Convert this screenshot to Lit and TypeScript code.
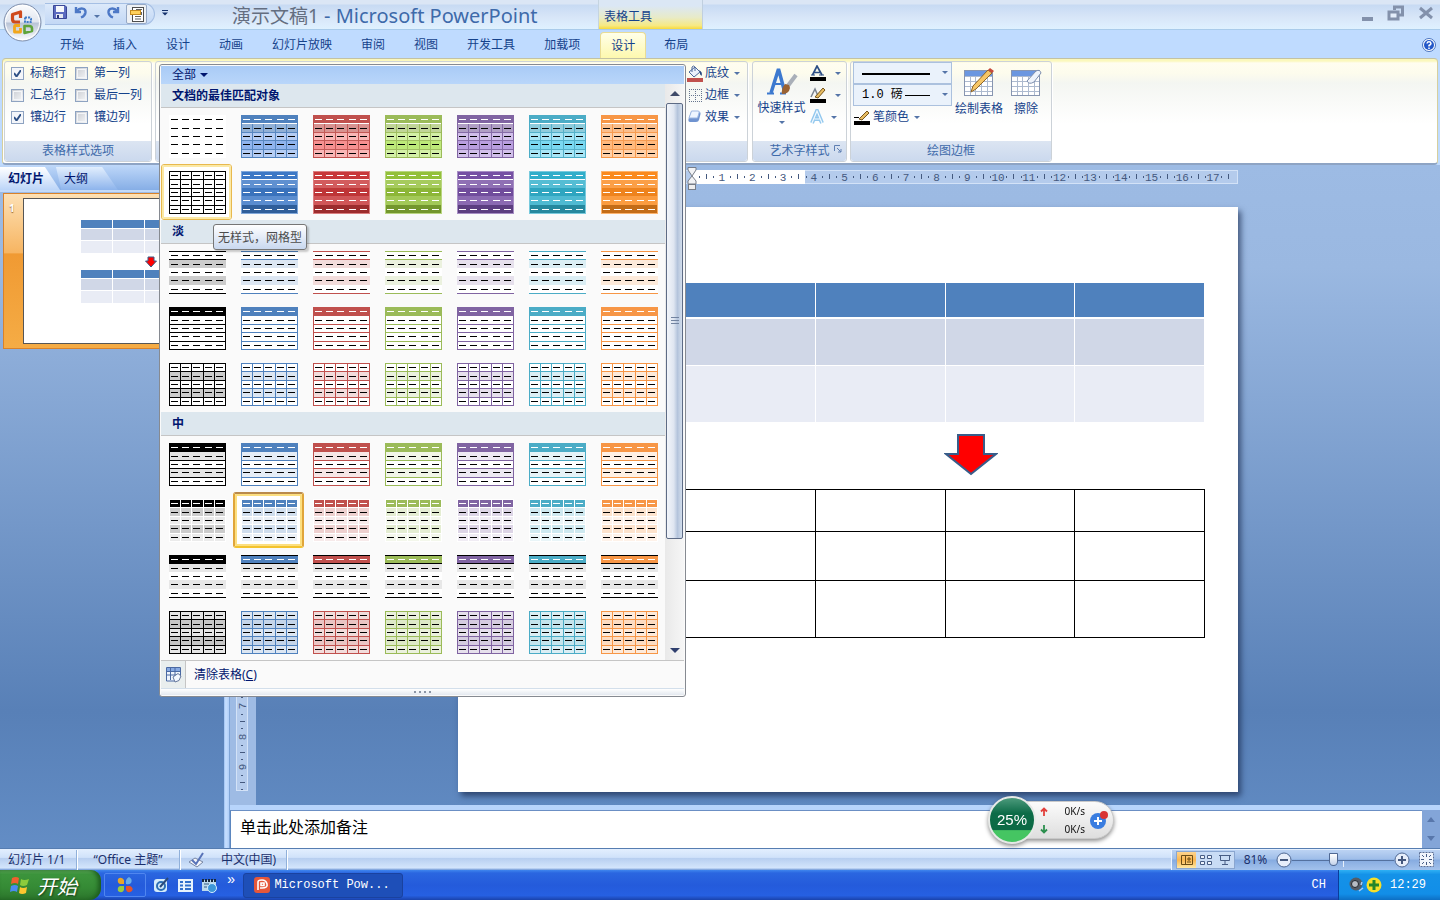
import { LitElement, html, svg, css, nothing } from "lit";
import { customElement, property } from "lit/decorators.js";
import { classMap } from "lit/directives/class-map.js";

const PALETTE = ["#000000", "#4f81bd", "#c0504d", "#9bbb59", "#8064a2", "#4bacc6", "#f79646"];
const VIVID = ["#000000", "#3c78c6", "#c8383a", "#93c03a", "#7650a4", "#30aeca", "#fa8a1e"];
const BRIGHT = ["#000000", "#5a90e6", "#f25c5c", "#9ede3a", "#9870d0", "#3cc6ea", "#ff9840"];
const PALETTE_NAMES = ["黑色", "蓝色", "红色", "绿色", "紫色", "水绿色", "橙色"];
const COLS = [0, 11, 22, 34, 45, 56];
const ROWS = [0, 8, 17, 25, 34, 42];
const DASH_X = [2, 13, 24, 36, 47];
const DASH_Y = [4, 13, 21, 29, 38];

/** Blend a hex colour with a target; amount 1 keeps the colour, 0 gives the target. */
function mix(hex: string, amount: number, target = 255): string {
  const v = [1, 3, 5].map((i) => parseInt(hex.slice(i, i + 2), 16));
  return `rgb(${v.map((c) => Math.round(c * amount + target * (1 - amount))).join(",")})`;
}

interface Look {
  fills: (string | null)[];
  lines?: string;
  linesAt?: number[];
  vlines?: string;
  vFrom?: number;
  outline?: string;
  headDash?: string;
  dash?: string;
  under?: boolean;
}

function look(kind: string, c: string): Look {
  const black = c === PALETTE[0];
  const vivid = VIVID[PALETTE.indexOf(c)];
  const bright = BRIGHT[PALETTE.indexOf(c)];
  const t = (a: number, b: number) => (black ? mix(c, b) : mix(c, a));
  switch (kind) {
    case "themed":
      if (black) return { fills: [] };
      return { fills: [c, mix(c, 0.62), mix(bright, 0.45), mix(bright, 0.68), mix(bright, 0.45)], lines: mix(c, 0.95), linesAt: [2, 3, 4, 5], vlines: mix(c, 0.95), vFrom: 9, outline: c, headDash: "#fff", under: true };
    case "solid":
      if (black) return { fills: [], lines: c, linesAt: [0, 1, 2, 3, 4, 5], vlines: c, outline: c };
      return { fills: [vivid, mix(vivid, 0.82), mix(vivid, 0.95, 0), mix(vivid, 0.85), mix(vivid, 0.78, 0)], headDash: "#fff", dash: "#fff", under: true, outline: mix(vivid, 0.65) };
    case "light1":
      return { fills: [null, t(0.2, 0.2), null, t(0.2, 0.2)], lines: c, linesAt: [0, 1, 5] };
    case "light2":
      return { fills: [c], lines: c, linesAt: [0, 1, 2, 3, 4, 5], outline: c, headDash: "#fff" };
    case "light3":
      return { fills: [null, t(0.2, 0.2), null, t(0.2, 0.2)], lines: c, linesAt: [0, 1, 2, 3, 4, 5], vlines: c, outline: c };
    case "medium1":
      return { fills: [c, t(0.14, 0.1), null, t(0.14, 0.1)], lines: c, linesAt: [0, 1, 2, 3, 4, 5], outline: c, headDash: "#fff" };
    case "medium2":
      return { fills: [c, t(0.27, 0.2), t(0.12, 0.08), t(0.27, 0.2), t(0.12, 0.08)], lines: "#fff", linesAt: [0, 1, 2, 3, 4, 5], vlines: "#fff", outline: "#fff", headDash: "#fff" };
    case "medium3":
      return { fills: [c, "#e7e7e7", null, "#e7e7e7"], lines: "#000", linesAt: [0, 1, 5], headDash: "#fff" };
    default:
      return { fills: [t(0.2, 0.1), t(0.33, 0.22), t(0.2, 0.1), t(0.33, 0.22), t(0.2, 0.1)], lines: c, linesAt: [0, 1, 2, 3, 4, 5], vlines: c, outline: c };
  }
}

@customElement("style-thumb")
class StyleThumb extends LitElement {
  @property() kind = "";
  @property() color = "#000000";

  static styles = css`
    :host { display: block; width: 57px; height: 43px; }
    svg { display: block; background: #fff; }
  `;

  render() {
    const k = look(this.kind, this.color);
    const vFrom = k.vFrom ?? 0;
    return html`<svg width="57" height="43" shape-rendering="crispEdges" aria-hidden="true">
      ${k.fills.map((f, i) => (f ? svg`<rect x="0" y=${ROWS[i]} width="57" height=${ROWS[i + 1] - ROWS[i] + (i === 4 ? 1 : 0)} fill=${f} />` : nothing))}
      ${k.lines ? k.linesAt!.map((i) => svg`<rect x="0" y=${ROWS[i]} width="57" height="1" fill=${k.lines!} />`) : nothing}
      ${k.vlines ? COLS.map((x) => svg`<rect x=${x} y=${vFrom} width="1" height=${43 - vFrom} fill=${k.vlines!} />`) : nothing}
      ${k.outline ? svg`<rect x="0.5" y="0.5" width="56" height="42" fill="none" stroke=${k.outline} />` : nothing}
      ${k.under ? svg`<rect x="1" y="8" width="55" height="1" fill="#fff" />` : nothing}
      ${DASH_Y.map((y, r) => DASH_X.map((x) => svg`<rect x=${x} y=${y} width="7" height="1" fill=${r === 0 ? k.headDash ?? "#000" : k.dash ?? "#000"} />`))}
    </svg>`;
  }
}

@customElement("style-gallery")
class StyleGallery extends LitElement {
  static styles = css`
    :host { display: block; box-sizing: border-box; border: 1px solid #868a91; border-radius: 3px; background: #fafafa; padding: 1px; color: #00156e; }
    button { font: inherit; color: inherit; border: 0; background: none; padding: 0; }
    .filter { display: flex; align-items: center; gap: 4px; width: 100%; height: 18px; padding-left: 11px; background: linear-gradient(#a9cbf6, #b9d6fa); }
    .body { display: flex; }
    .sections { flex: 1; }
    h3 { box-sizing: border-box; margin: 0; height: 24px; line-height: 23px; padding-left: 11px; font-size: 12px; font-weight: 700; background: #dde7ee; border-bottom: 1px solid #c5c5c5; }
    .grid { display: grid; grid-template-columns: repeat(7, 72px); grid-auto-rows: 56px; }
    .cell { display: flex; box-sizing: border-box; padding: 7px 0 0 8px; border-radius: 3px; }
    .hot, .current { width: 71px; background: #fff; }
    .hot { border: 1px solid #e8b94e; padding: 6px 0 0 7px; outline: 2px solid #fbe9a6; outline-offset: -3px; }
    .current { border: 2px solid; border-color: #b98a4c #e0a53a #f3c32f; padding: 5px 0 0 6px; outline: 2px solid #fcdf80; outline-offset: -4px; }
    .bar { display: flex; flex-direction: column; width: 19px; background: linear-gradient(90deg, #e9e9e9, #f6f6f6); }
    .arrow { display: grid; place-items: center; height: 19px; width: 100%; }
    .knob { box-sizing: border-box; display: grid; place-items: center; margin: 0 1px; height: 436px; border: 1px solid #5d6b85; border-radius: 2px; background: linear-gradient(90deg, #f2f5fa, #dfe6f1 45%, #b4c4dc 70%, #d3deec); }
    .space { flex: 1; }
    .clear { display: flex; align-items: center; width: 100%; height: 28px; border-top: 1px solid #c5c5c5; gap: 8px; }
    .slot { display: grid; place-items: center; box-sizing: border-box; width: 25px; height: 27px; background: #e9eeee; border-right: 1px solid #c5c5c5; }
    .grip { display: flex; justify-content: center; align-items: center; gap: 3px; height: 6px; background: linear-gradient(#fff, #e3e8ef); border-top: 1px solid #d3dfeb; }
    .grip i { width: 2px; height: 2px; background: #8b95a6; }
    u { text-underline-offset: 1px; }
  `;

  private section(title: string, kinds: string[]) {
    return html`<section>
      <h3>${title}</h3>
      <div class="grid">
        ${kinds.map((kind) => PALETTE.map((c, i) => html`<button
          aria-label=${`${title} ${PALETTE_NAMES[i]}`}
          class=${classMap({ cell: true, hot: kind === "solid" && i === 0, current: kind === "medium2" && i === 1 })}>
          <style-thumb .kind=${kind} .color=${c}></style-thumb>
        </button>`))}
      </div>
    </section>`;
  }

  render() {
    return html`
      <button class="filter">全部<svg width="8" height="4"><path d="M0 0H8L4 4Z" fill="#00156e" /></svg></button>
      <div class="body">
        <div class="sections">
          ${this.section("文档的最佳匹配对象", ["themed", "solid"])}
          ${this.section("淡", ["light1", "light2", "light3"])}
          ${this.section("中", ["medium1", "medium2", "medium3", "medium4"])}
        </div>
        <div class="bar">
          <button class="arrow" aria-label="向上"><svg width="10" height="5"><path d="M0 5H10L5 0Z" fill="#3f4a68" /></svg></button>
          <div class="knob"><svg width="8" height="8" shape-rendering="crispEdges"><path d="M0 .5H8M0 3.500H8M0 6.500H8" stroke="#7283a0" /></svg></div>
          <div class="space"></div>
          <button class="arrow" aria-label="向下"><svg width="10" height="5"><path d="M0 0H10L5 5Z" fill="#2f3f6e" /></svg></button>
        </div>
      </div>
      <button class="clear"><span class="slot"><svg width="17" height="17" viewBox="0 0 17 17"><path d="M1.500 1.500H15.500V11L10 15H1.500Z" fill="#eef4fc" stroke="#4a69a3" /><path d="M2 2H15V5H2Z" fill="#86a9e2" /><path d="M1.500 5.500H15M1.500 9H15M5.500 2V14M10 2V11" stroke="#4a69a3" fill="none" /><path d="M8 11L13 7.500 16 10 14 14.500 10 16Z" fill="#f4f8ff" stroke="#66789c" /></svg></span><span>清除表格(<u>C</u>)</span></button>
      <div class="grip"><i></i><i></i><i></i><i></i></div>
    `;
  }
}

const caret = () => html`<svg class="caret" width="6" height="3"><path d="M0 0H6L3 3Z" fill="#5474a8" /></svg>`;

const letterA = svg`<path d="M2.500 10L7 1L12 10M4.500 7.500H10" fill="none" stroke="#2c4f86" stroke-width="1.700" /><path d="M1 10H5M9 10H14" stroke="#2c4f86" stroke-width="1.200" />`;

@customElement("app-ribbon")
class AppRibbon extends LitElement {
  static styles = css`
    :host { display: block; background: #bfdbff; color: #15428b; position: relative; z-index: 5; }
    * { box-sizing: border-box; }
    button { font: inherit; color: inherit; border: 0; background: none; padding: 0; white-space: nowrap; }
    .title { display: flex; height: 30px; padding-left: 45px; border-bottom: 1px solid #a9cbea; background: linear-gradient(#dbe6f5 0 4px, #c7daf3 5px, #d8e6f8 60%, #dff1ff); }
    .quick { display: flex; align-items: center; gap: 6px; width: 110px; height: 22px; margin-top: 3px; padding-left: 7px; border: 1px solid #a5bfe4; border-left: 0; border-radius: 0 11px 11px 0; background: linear-gradient(#dce9fa, #c3d8f5); }
    .boxed { display: grid; place-items: center; width: 21px; height: 20px; border: 1px solid #96a9c6; border-radius: 2px; background: #eef1f5; }
    .more { width: 20px; height: 24px; }
    h1 { margin: 0 0 0 57px; width: 366px; font-size: 20px; line-height: 32px; font-weight: 400; color: #3e6aaa; white-space: nowrap; }
    h1 span { font-size: 19px; color: #646e80; }
    .context { width: 105px; padding-left: 5px; line-height: 33px; border-left: 1px solid #c5d4e0; border-right: 1px solid #c0cfdf; background: linear-gradient(#dbe7f5 20%, #e8ebc8 60%, #f6e983 88%, #f7d93c); }
    .window { display: flex; align-items: center; gap: 13px; margin-left: auto; padding: 2px 6px 0 0; height: 28px; }
    .orb { position: absolute; left: 3px; top: 3px; }
    .tabs { display: flex; height: 28px; padding: 2px 4px 0 60px; gap: 29px; align-items: center; }
    .tabs .on { width: 46px; height: 26px; align-self: end; margin-left: -9px; margin-right: -11px; background: linear-gradient(#ffffe9, #fdf8ae); border: 1px solid #e9dc94; border-bottom: 0; border-radius: 4px 4px 0 0; }
    .help { display: grid; margin-left: auto; }
    .panel { display: flex; gap: 3px; height: 107px; margin: 0 2px; padding: 2px 2px 0 1px; border: 1px solid #d5cf9e; border-top: 1px solid #c3c2a4; border-bottom: 2px solid #8ea4c4; border-radius: 4px; background: linear-gradient(#fbf8bd 0 2px, #fffdf0 4px, #fdfced 14px, #f4f6f2 24px, #fff 65px); }
    .group { display: flex; flex-direction: column; height: 101px; border: 1px solid #ccd2d8; border-radius: 3px; box-shadow: 1px 1px 0 #fff; }
    .content { flex: 1; }
    .caption { position: relative; height: 20px; line-height: 19px; text-align: center; color: #3e6aaa; background: linear-gradient(#dce5f2, #cbd9ee); border-radius: 0 0 3px 3px; }
    .launch { position: absolute; right: 4px; top: 4px; }
    .options { width: 148px; }
    .checks { display: grid; grid-template-columns: 64px 78px; grid-auto-rows: 22px; padding-left: 6px; }
    label { display: flex; align-items: center; gap: 6px; white-space: nowrap; }
    .checks input { appearance: none; margin: 0; width: 13px; height: 13px; border: 1px solid #8ea3c1; background: linear-gradient(135deg, #c9ccd2, #f5f6f8); outline: 1px solid #f3f5f8; outline-offset: -3px; }
    .checks input:checked { background: #f4f6fb url('data:image/svg+xml,<svg xmlns="http://www.w3.org/2000/svg" width="11" height="11"><path d="M2 5L4.500 8.500L9 2" fill="none" stroke="%232e5085" stroke-width="2"/></svg>'); }
    .styles { position: relative; width: 593px; }
    .fills { display: flex; flex-direction: column; align-items: flex-end; padding-right: 7px; }
    .line { display: flex; align-items: center; height: 22px; }
    .line .caret { margin-left: 5px; }
    .line > svg:first-child { margin-right: 2px; }
    style-gallery { position: absolute; left: 3px; top: 2px; width: 527px; z-index: 10; }
    .tip { position: absolute; left: 57px; top: 162px; width: 94px; height: 26px; line-height: 25px; text-align: center; color: #4c4c4c; border: 1px solid #767676; border-radius: 3px; background: linear-gradient(#fff, #c9d8ef); z-index: 11; box-shadow: 2px 2px 2px rgba(0, 0, 0, 0.2); }
    .art { width: 95px; margin-left: 1px; }
    .art .content { display: flex; }
    .big { display: flex; flex-direction: column; align-items: center; line-height: 16px; gap: 2px; }
    .big > svg { flex: none; }
    .big .caret { margin-top: 3px; }
    .art .big { width: 57px; padding-top: 4px; }
    .borders { width: 202px; }
    .borders .content { display: flex; }
    .pens { width: 104px; padding: 0 2px; }
    select { display: block; appearance: none; width: 99px; height: 22px; margin: 0; padding: 0 8px; border: 1px solid #abc1de; border-radius: 0; color: #000; font: 12px "Liberation Mono", "Noto Sans CJK SC", monospace; }
    .stroke { background: linear-gradient(#000, #000) 8px 10px / 68px 2px no-repeat, #eaf2fb; }
    .weight { background: linear-gradient(#000, #000) 51px 10px / 25px 1px no-repeat, #eaf2fb; }
    .drop { position: relative; display: block; }
    .drop .caret { position: absolute; right: 5px; top: 9px; }
    .borders .big { padding-top: 5px; }
    .draw { width: 48px; }
    .erase { width: 46px; }
  `;

  private check(text: string, on: boolean) {
    return html`<label><input type="checkbox" .checked=${on} />${text}</label>`;
  }

  private tableIcon(tool: unknown) {
    return html`<svg width="32" height="32" viewBox="0 0 32 32"><rect x="1.500" y="3.500" width="28" height="25" fill="#fff" stroke="#8795b0" /><rect x="2" y="4" width="27" height="5" fill="#6c97e0" /><path d="M2 9.500H29M2 14.500H29M2 19.500H29M2 24.500H29M7.500 9V28M12.500 9V28M18.500 9V28M24.500 9V28" stroke="#adbacf" fill="none" />${tool}</svg>`;
  }

  render() {
    return html`
      <div class="title">
        <div class="quick">
          <button aria-label="保存"><svg width="16" height="16"><path d="M1.500 1.500H13L14.500 3V14.500H1.500Z" fill="#5b6bc0" stroke="#3a4796" /><rect x="4" y="2" width="8" height="6" fill="#f5f7fb" /><rect x="4" y="10" width="7" height="4" fill="#e4e8f2" /><rect x="5" y="11" width="2" height="3" fill="#27357b" /></svg></button>
          <button aria-label="撤消"><svg width="14" height="14"><path d="M2 2V7H7M3 6C6 2 12 3 11.500 7.500Q11 11 7 12.500" fill="none" stroke="#4d78c6" stroke-width="2.400" /></svg></button>
          <button aria-label="撤消选项">${caret()}</button>
          <button aria-label="重复"><svg width="14" height="14"><path d="M12 2V7H7M11 6C8 2 2 3 2.500 7.500Q3 11 7 12.500" fill="none" stroke="#4d78c6" stroke-width="2.400" /></svg></button>
          <button class="boxed" aria-label="版式"><svg width="16" height="17"><rect x="3.500" y="1.500" width="11" height="14" fill="#fff" stroke="#4e4e4e" /><rect x="1.500" y="4.500" width="10" height="4" fill="#ffd15c" stroke="#c58b1e" /><path d="M7 3.500H13M6 10.500H12M6 13H12M12.500 6V9" stroke="#606060" /></svg></button>
        </div>
        <button class="more" aria-label="自定义快速访问工具栏"><svg width="6" height="6"><path d="M0 2.500H6L3 5.500Z" fill="#15306b" /><rect width="6" height="1" fill="#15306b" /></svg></button>
        <h1><span>演示文稿1</span> - Microsoft PowerPoint</h1>
        <div class="context">表格工具</div>
        <div class="window">
          <button aria-label="最小化"><svg width="12" height="18"><rect y="13" width="11" height="4" fill="#8391ab" /></svg></button>
          <button aria-label="还原"><svg width="18" height="18"><path d="M7.500 6V3H15.500V11H12" fill="none" stroke="#8391ab" stroke-width="3" /><rect x="2" y="8" width="9" height="7" fill="#e4eefb" stroke="#8391ab" stroke-width="3" /></svg></button>
          <button aria-label="关闭"><svg width="16" height="18"><path d="M2 4L14 14M14 4L2 14" stroke="#8391ab" stroke-width="3" /></svg></button>
        </div>
      </div>
      <button class="orb" aria-label="Office 按钮"><svg width="39" height="39" viewBox="0 0 39 39">
        <defs><linearGradient id="orb" x2="0" y2="1"><stop offset="0" stop-color="#fdfdfe" /><stop offset=".48" stop-color="#e1e6ef" /><stop offset=".52" stop-color="#b9c4d6" /><stop offset="1" stop-color="#fff" /></linearGradient></defs>
        <circle cx="19.500" cy="19.500" r="18.500" fill="url(#orb)" stroke="#8090ad" /><circle cx="19.500" cy="19.500" r="17" fill="none" stroke="#fff" />
        <g fill="none" stroke-linejoin="round"><path d="M17 19H12Q9.500 19 9.500 16V11.500L17.500 9V15" stroke="#cf4a1c" stroke-width="3.200" /><path d="M22 14.500H26.500Q28 14.500 28 16V19H22Z" stroke="#3f7cc9" stroke-width="2" stroke-dasharray="2 1" /><path d="M17 22.500H12.500Q11.500 22.500 11.500 24V29H17.500V25" stroke="#f2a71c" stroke-width="2.800" /><path d="M21.500 23H26Q29 23 29 25.500V28L21.500 30Z" stroke="#5fa43a" stroke-width="2.600" /></g>
      </svg></button>
      <nav class="tabs">
        ${["开始", "插入", "设计", "动画", "幻灯片放映", "审阅", "视图", "开发工具", "加载项"].map((t) => html`<button>${t}</button>`)}
        <button class="on">设计</button><button>布局</button>
        <button class="help" aria-label="帮助"><svg width="14" height="14"><circle cx="7" cy="7" r="6.500" fill="#fff" stroke="#4a74bf" /><circle cx="7" cy="7" r="5" fill="#2458c8" /><path d="M5 5.500Q5.200 3.800 7 3.800T9 5.500Q9 6.500 7 7.500V8.500M7 9.500V11" fill="none" stroke="#fff" stroke-width="1.500" /></svg></button>
      </nav>
      <div class="panel">
        <div class="group options">
          <div class="content checks">
            ${this.check("标题行", true)}${this.check("第一列", false)}
            ${this.check("汇总行", false)}${this.check("最后一列", false)}
            ${this.check("镶边行", true)}${this.check("镶边列", false)}
          </div>
          <div class="caption">表格样式选项</div>
        </div>
        <div class="group styles">
          <div class="content fills">
            <button class="line"><svg width="16" height="17"><rect y="13" width="16" height="4" fill="#c0504d" /><path d="M2 7L8 2L13 7L7 12Z" fill="#eaf1fb" stroke="#4c689c" /><path d="M5 7V2Q6.500 0 8 2V6" fill="none" stroke="#4c689c" /><path d="M12 5Q16 7 14.500 11Q12 9 13 7Z" fill="#24467f" /></svg>底纹${caret()}</button>
            <button class="line"><svg width="16" height="16"><path d="M2 2.500H15M2 8.500H15M2 14.500H15M2.500 2V15M8.500 2V15M14.500 2V15" stroke="#66758f" stroke-dasharray="1 1" fill="none" /></svg>边框${caret()}</button>
            <button class="line"><svg width="16" height="16"><path d="M4 3H12Q14 3 13.500 5L12 11Q11.500 13 9 13H3Q1 13 1.500 10Z" fill="#6f93d0" /><path d="M4.500 2H11Q13 2 12 4L10.500 9H2Z" fill="#eef5ff" stroke="#9db7e2" /></svg>效果${caret()}</button>
          </div>
          <div class="caption"></div>
          <style-gallery></style-gallery>
          <div class="tip" role="tooltip">无样式，网格型</div>
        </div>
        <div class="group art">
          <div class="content">
            <button class="big"><svg width="32" height="32"><path d="M5 27L12.500 3L19 27" fill="none" stroke="#3c79cf" stroke-width="3.500" stroke-linejoin="bevel" /><path d="M8 18H18M1 27.500H8M14 27.500H20" stroke="#3c79cf" stroke-width="2" /><path d="M30 9L21 21" stroke="#a9afb8" stroke-width="4" /><path d="M23 19L19 18Q15 23 16 28Q23 28 24 22Z" fill="#9a6232" /></svg>快速样式${caret()}</button>
            <div>
              <button class="line" aria-label="文本填充"><svg width="18" height="16">${letterA}<rect y="12" width="16" height="4" /></svg>${caret()}</button>
              <button class="line" aria-label="文本轮廓"><svg width="18" height="16"><path d="M1 10L5 2L8 9" fill="none" stroke="#7b8491" stroke-width="1.500" /><path d="M5 10L13 1L15 3L8 11Z" fill="#e8bd62" stroke="#76551c" /><rect y="12" width="16" height="4" /></svg>${caret()}</button>
              <button class="line" aria-label="文本效果"><svg width="14" height="16"><path d="M2 14L7 2L12 14M4.500 10H10" fill="none" stroke="#93c8ee" stroke-width="4" /><path d="M2 14L7 2L12 14M4.500 10H10" fill="none" stroke="#f2f9ff" stroke-width="1.200" /></svg>${caret()}</button>
            </div>
          </div>
          <div class="caption">艺术字样式<svg class="launch" width="8" height="8"><path d="M.5 6V.5H6M3 3L7 7M7 4V7H4" fill="none" stroke="#5f7fb2" /></svg></div>
        </div>
        <div class="group borders">
          <div class="content">
            <div class="pens">
              <span class="drop"><select class="stroke" aria-label="笔样式"><option></option></select>${caret()}</span>
              <span class="drop"><select class="weight" aria-label="笔划粗细"><option>1.0 磅</option></select>${caret()}</span>
              <button class="line"><svg width="18" height="16"><path d="M1 8.500H6" stroke="#000" /><path d="M6 10L14 2L16 4L9 11Z" fill="#e8bd62" stroke="#76551c" /><rect x="1" y="12" width="16" height="4" /></svg>笔颜色${caret()}</button>
            </div>
            <button class="big draw">${this.tableIcon(svg`<path d="M8 25L10 19L25 3L29 6L13 22Z" fill="#f6c667" stroke="#8f6426" /><path d="M25 3L27 1L31 4L29 6Z" fill="#c74a3a" />`)}绘制表格</button>
            <button class="big erase">${this.tableIcon(svg`<path d="M17 14L26 4Q30 2 31 6L24 15Q19 18 17 14Z" fill="#eef3fb" stroke="#7c8dad" />`)}擦除</button>
          </div>
          <div class="caption">绘图边框</div>
        </div>
      </div>
    `;
  }
}

const UNIT = 780 / 25.4;

@customElement("slide-editor")
class SlideEditor extends LitElement {
  static styles = css`
    :host { display: flex; min-height: 0; background: linear-gradient(#9dbbe4, #9ab8e1 15%, #5880b7 80%, #638dc5); }
    * { box-sizing: border-box; }
    button { font: inherit; color: inherit; border: 0; padding: 0; text-align: left; }
    .outline { display: flex; flex-direction: column; width: 224px; }
    .tabs { display: flex; height: 27px; padding-top: 2px; border-bottom: 2px solid #c3dafa; background: linear-gradient(#bfd8f9, #86aee6); color: #00156e; }
    .tabs button { height: 23px; }
    .slides { width: 60px; padding-left: 8px; font-weight: 700; background: linear-gradient(#fff, #bcd5f8); clip-path: polygon(0 0, 75% 0, 100% 100%, 0 100%); z-index: 1; }
    .topics { width: 66px; margin-left: -8px; padding-left: 12px; background: linear-gradient(#e2eefd, #8db4ec); clip-path: polygon(0 0, 76% 0, 100% 100%, 14% 100%, 6% 0); }
    .item { display: flex; gap: 5px; margin: 1px 3px; padding: 4px 4px 4px 5px; border: 1px solid #d9822a; background: linear-gradient(#fde0b4, #f7b562 38%, #f09a33 39%, #f5ac45); }
    .item b { width: 9px; padding-top: 3px; line-height: 14px; color: #fff; font-size: 10px; text-shadow: 0 1px 1px #93602a; }
    .mini { display: flex; flex-direction: column; width: 194px; height: 146px; padding: 20px 6px 0 56px; border: 1px solid #565656; background: #fff; }
    .mini svg { align-self: flex-end; margin: 2px 52px 1px 0; }
    table { width: 100%; border-collapse: collapse; table-layout: fixed; }
    .mini td { border: 1px solid #fff; padding: 0; height: 13px; background: #e9ecf5; }
    .mini tr:nth-child(2) td { height: 12px; background: #d0d7e7; }
    .mini tr:first-child td { height: 9px; background: #4f81bd; }
    .split { width: 6px; background: linear-gradient(90deg, #9cc0f2, #c8e0ff 30%, #b2d0f9 80%, #5b86bf); }
    .main { display: flex; flex: 1; flex-direction: column; min-width: 0; }
    .canvas { display: flex; flex: 1; min-height: 0; }
    .side { width: 26px; padding: 41px 0 0 6px; background: #9ebbe4; }
    .stage { display: flex; flex: 1; flex-direction: column; align-items: center; padding-top: 5px; }
    svg text { font: 11px "Liberation Mono", monospace; fill: #44597e; text-anchor: middle; }
    .ruler { display: block; overflow: visible; }
    .slide { display: flex; flex-direction: column; width: 780px; aspect-ratio: 4 / 3; margin-top: 23px; padding: 75px 33px 0 227px; background: #fff; box-shadow: 3px 4px 6px rgba(20, 35, 70, 0.65); }
    .slide td { padding: 0; }
    .filled td { height: 57px; background: #e9ecf5; border: 1px solid #fff; }
    .filled tr:nth-child(2) td { height: 48px; background: #d0d7e7; }
    .filled tr:first-child td { height: 35px; background: #4f81bd; border-bottom: 2px solid #fff; }
    .plain td { height: 57px; border: 1px solid #000; }
    .plain tr:nth-child(2) td { height: 49px; }
    .plain tr:first-child td { height: 42px; }
    .arrow { align-self: flex-end; margin: 11px 207px 13px 0; }
    .notes { display: flex; height: 43px; border-top: 5px solid #b7d4fb; }
    textarea { flex: 1; resize: none; border: 0; border-left: 1px solid #5b86bf; border-top: 1px solid #6b8fc4; padding: 3px 9px; background: #fff; color: #000; font: 16px/24px "Noto Sans CJK SC", sans-serif; outline: none; overflow: hidden; }
    .scroll { display: flex; flex-direction: column; align-items: center; justify-content: space-between; width: 18px; padding: 7px 0; background: #83a5d8; }
  `;

  private table(cls: string) {
    return html`<table class=${cls}><tbody>${[0, 1, 2].map(() => html`<tr><td></td><td></td><td></td><td></td></tr>`)}</tbody></table>`;
  }

  private horizontal() {
    const start = 233;
    const marks = Array.from({ length: 17 }, (_, i) => i + 1);
    return html`<svg class="ruler" width="780" height="14">
      <rect x=".5" y=".5" width="779" height="13" fill="#b4cbec" stroke="#d3e2f7" />
      <rect x=${start} y="0" width="114" height="14" fill="#fff" />
      ${marks.map((n) => svg`<text x=${start + n * UNIT} y="11">${n}</text>`)}
      ${[0, ...marks].map((n) => svg`<rect x=${Math.round(start + (n + 0.27) * UNIT)} y="6" width="1" height="2" fill="#44597e" /><rect x=${Math.round(start + (n + 0.5) * UNIT)} y="4" width="1" height="5" fill="#44597e" />${n < 17 ? svg`<rect x=${Math.round(start + (n + 0.73) * UNIT)} y="6" width="1" height="2" fill="#44597e" />` : nothing}`)}
      <path d="M230 -2.500H238V0L234 6L238 11V14H230V11L234 6L230 0Z" fill="#f2f3f5" stroke="#777d88" /><rect x="230.500" y="14.500" width="7" height="5" fill="#eee" stroke="#777d88" />
    </svg>`;
  }

  private vertical() {
    return html`<svg class="ruler" width="14" height="585">
      <rect x=".5" y=".5" width="11" height="584" fill="#b4cbec" stroke="#d3e2f7" />
      ${[-9, -8, -7, -6, -5, -4, -3, -2, -1, 0, 1, 2, 3, 4, 5, 6, 7, 8, 9].map((n) => {
        const y = 285 + n * UNIT;
        return svg`<text transform=${`translate(10 ${Math.round(y)}) rotate(-90)`}>${Math.abs(n)}</text>
          <rect x="5" y=${Math.round(y + 8)} width="2" height="1" fill="#44597e" />
          <rect x="4" y=${Math.round(y + 15)} width="5" height="1" fill="#44597e" />
          <rect x="5" y=${Math.round(y + 22)} width="2" height="1" fill="#44597e" />`;
      })}
    </svg>`;
  }

  render() {
    return html`
      <div class="outline">
        <div class="tabs"><button class="slides">幻灯片</button><button class="topics">大纲</button></div>
        <div class="item"><b>1</b>
          <div class="mini">${this.table("")}
            <svg width="12" height="12"><path d="M3 1H9V5H11.500L6 11L.5 5H3Z" fill="#f00" stroke="#385d8a" /></svg>
            ${this.table("")}</div>
        </div>
      </div>
      <div class="split"></div>
      <div class="main">
        <div class="canvas">
          <div class="side">${this.vertical()}</div>
          <div class="stage">
            ${this.horizontal()}
            <div class="slide">
              ${this.table("filled")}
              <svg class="arrow" width="54" height="42"><path d="M14 1H40V20H52L27 40L2 20H14Z" fill="#f00" stroke="#385d8a" stroke-width="2" /></svg>
              ${this.table("plain")}
            </div>
          </div>
        </div>
        <div class="notes">
          <textarea aria-label="备注" .value=${"单击此处添加备注"}></textarea>
          <div class="scroll"><svg width="8" height="5"><path d="M0 5H8L4 0Z" fill="#5877ab" /></svg><svg width="8" height="5"><path d="M0 0H8L4 5Z" fill="#5877ab" /></svg></div>
        </div>
      </div>
    `;
  }
}

@customElement("status-strip")
class StatusStrip extends LitElement {
  static styles = css`
    :host { display: flex; align-items: center; height: 22px; box-sizing: border-box; border-top: 1px solid #567db1; color: #1b2f6b; background: linear-gradient(#e3effe, #d0e2fa 40%, #b8cff0 45%, #d3e5fc 90%, #6f97d6); white-space: nowrap; }
    * { box-sizing: border-box; }
    button { font: inherit; color: inherit; border: 0; padding: 0; background: none; }
    .cell { height: 20px; border-right: 1px solid #90b0da; box-shadow: 1px 0 0 #fff; line-height: 20px; text-align: left; }
    .page { width: 77px; padding-left: 8px; }
    .theme { width: 103px; text-align: center; }
    .lang { display: flex; align-items: center; gap: 16px; width: 107px; padding-left: 8px; }
    .right { display: flex; align-items: center; height: 20px; margin-left: auto; padding: 0 6px 0 4px; border-left: 1px solid #eef5ff; background: linear-gradient(#bcd3f3, #9fbee9 45%, #86abe0 50%, #a3c2ec); }
    .views { display: flex; height: 18px; border: 1px solid #8aa6d0; background: #c9dcf5; }
    .views button { display: grid; place-items: center; width: 19px; }
    .views .on { background: linear-gradient(#fdd490, #fbb64f 50%, #fee8a5); }
    .percent { width: 41px; text-align: center; }
    .round { display: grid; }
    input { appearance: none; width: 102px; height: 18px; margin: 0; background: linear-gradient(#54719f, #54719f) 0 9px / 100% 1px no-repeat, linear-gradient(#e8f0fb, #e8f0fb) 50% 9px / 1px 7px no-repeat; }
    input::-webkit-slider-thumb { appearance: none; width: 9px; height: 13px; background: linear-gradient(#fff, #c4d3ea); border: 1px solid #4f6893; border-radius: 1px 1px 5px 5px; }
    .fit { display: grid; margin-left: 9px; }
  `;

  private round(plus: boolean) {
    return html`<button class="round" aria-label=${plus ? "放大" : "缩小"}><svg width="16" height="16"><circle cx="8" cy="8" r="7" fill="#e7eefa" stroke="#4f6893" /><path d=${plus ? "M4 8H12M8 4V12" : "M4 8H12"} stroke="#45587d" stroke-width="2" /></svg></button>`;
  }

  render() {
    return html`
      <div class="cell page">幻灯片 1/1</div>
      <div class="cell theme">“Office 主题”</div>
      <div class="cell lang"><svg width="17" height="16"><path d="M1 10L7 6L15 10L9 15Z" fill="#f4f6fb" stroke="#7786a5" /><path d="M4 8L8 12L15 1" fill="none" stroke="#5873b8" stroke-width="2" /></svg>中文(中国)</div>
      <div class="right">
        <div class="views">
          <button class="on" aria-label="普通视图"><svg width="12" height="12"><path d="M.5 1.500H11.500V10.500H.5ZM4.500 1.500V10.500M6 8H10M7 4H9V6H7Z" fill="none" stroke="#6b4c16" /></svg></button>
          <button aria-label="幻灯片浏览"><svg width="12" height="12"><path d="M.5 1.500H4.500V4.500H.5ZM7.500 1.500H11.500V4.500H7.500ZM.5 7.500H4.500V10.500H.5ZM7.500 7.500H11.500V10.500H7.500Z" fill="#eef4fd" stroke="#475d85" /></svg></button>
          <button aria-label="幻灯片放映"><svg width="12" height="12"><path d="M0 1.500H12M1.500 2V6.500H10.500V2M6 7V10M3 10.500H9" fill="none" stroke="#475d85" /></svg></button>
        </div>
        <span class="percent">81%</span>
        ${this.round(false)}
        <input type="range" min="0" max="100" value="40" aria-label="缩放" />
        ${this.round(true)}
        <button class="fit" aria-label="适应窗口"><svg width="15" height="15"><rect x=".5" y=".5" width="14" height="14" fill="#f1f5fc" stroke="#5c7097" stroke-dasharray="2 1" /><path d="M7.500 2V5M7.500 10V13M2 7.500H5M10 7.500H13M5 5L3 3M10 5L12 3M5 10L3 12M10 10L12 12" stroke="#475d85" /></svg></button>
      </div>
    `;
  }
}

@customElement("task-strip")
class TaskStrip extends LitElement {
  static styles = css`
    :host { display: flex; align-items: center; height: 30px; color: #fff; background: linear-gradient(#3f86ee, #2a66e0 10%, #245bdb 50%, #2660e2 85%, #1a43ac); font: 12px "Liberation Mono", monospace; }
    * { box-sizing: border-box; }
    button { font: inherit; color: inherit; border: 0; padding: 0; background: none; white-space: nowrap; }
    .start { display: flex; align-items: center; gap: 6px; width: 101px; height: 30px; padding-left: 10px; border-radius: 0 10px 12px 0; background: linear-gradient(#5eac5b, #3c943c 15%, #358a35 60%, #2b742b); box-shadow: inset -3px 0 4px #1d5c1f; font: italic 20px "Noto Sans CJK SC", sans-serif; text-shadow: 1px 1px 2px #173d17; }
    .quick { display: flex; align-items: center; gap: 7px; margin-left: 3px; }
    .quick button { display: grid; place-items: center; height: 24px; }
    .quick .wide { width: 42px; border: 1px solid #5086ef; border-radius: 2px; }
    .chevron { align-self: flex-start; line-height: 20px; margin: 0 8px 0 9px; font-size: 14px; }
    .task { display: flex; align-items: center; gap: 4px; width: 160px; height: 25px; padding-left: 10px; border: 1px solid #1a429f; border-radius: 3px; background: #1e4fb8; }
    .lang { margin-left: auto; margin-right: 12px; }
    .tray { display: flex; align-items: center; gap: 2px; width: 102px; height: 30px; padding-left: 9px; border-left: 1px solid #0a3d9c; background: linear-gradient(#2fb0f4, #1492e8 15%, #128ee8 80%, #0d6fc4); }
    .tray time { margin-left: 6px; }
  `;

  render() {
    return html`
      <button class="start"><svg width="21" height="20" viewBox="0 0 21 20"><path d="M2 3Q6 1 9 3L8 9Q5 7 1 9Z" fill="#f0602f" /><path d="M11 4Q14 6 19 4L17 10Q13 12 10 10Z" fill="#8bcb3c" /><path d="M1 11Q5 9 8 11L7 17Q4 15 0 17Z" fill="#4a8cf2" /><path d="M10 12Q13 14 17 12L16 18Q12 20 9 18Z" fill="#fbc62f" /></svg>开始</button>
      <div class="quick">
        <button class="wide" aria-label="Office"><svg width="18" height="18"><path d="M8 8H4Q1 7 2 3Q5 0 8 4Z" fill="#e8a52a" /><path d="M10 8Q9 3 13 1Q17 3 15 7Q13 9 10 8Z" fill="#69aee8" /><path d="M8 10V14Q6 18 2 15Q1 11 4 10Z" fill="#9acb3f" /><path d="M10 10H14Q18 12 16 15Q12 18 10 14Z" fill="#e2542f" /></svg></button>
        <button aria-label="编辑"><svg width="17" height="17"><rect x="1" y="2" width="13" height="13" rx="3" fill="#d5ecfb" /><circle cx="8" cy="9" r="4" fill="none" stroke="#2c6fb5" stroke-width="2" /><path d="M7 10L15 1" stroke="#2a4a7c" stroke-width="2" /></svg></button>
        <button aria-label="列表"><svg width="17" height="17"><rect x="1" y="2" width="15" height="13" fill="#e6f2fd" /><path d="M3 5H6M8 5H14M3 8.500H6M8 8.500H14M3 12H6M8 12H14" stroke="#2f6fcb" stroke-width="2" /></svg></button>
        <button aria-label="媒体"><svg width="17" height="17"><rect x="1" y="3" width="14" height="11" fill="#bcd9ec" /><path d="M1 3.500H15" stroke="#18283c" stroke-width="3" stroke-dasharray="2 1" /><circle cx="11" cy="11" r="4.500" fill="#3d97d8" stroke="#d4ecff" /><path d="M3 7H8M3 10H6" stroke="#375d83" /></svg></button>
      </div>
      <span class="chevron">»</span>
      <button class="task"><svg width="16" height="16"><rect width="16" height="16" rx="3" fill="#e5573a" /><path d="M4 13V5Q4 3 8 3T13 7T8 11H6M7 6H10V8.500H7Z" fill="none" stroke="#fff" stroke-width="1.600" /></svg>Microsoft Pow...</button>
      <span class="lang">CH</span>
      <div class="tray">
        <svg width="16" height="16"><circle cx="8" cy="7" r="6.500" fill="#545c66" /><circle cx="7" cy="7" r="3.500" fill="#b6bcc4" stroke="#23282e" /><path d="M11 14L15 11M13 8L14 5" stroke="#a9cdf7" stroke-width="1.500" /></svg>
        <svg width="16" height="16"><circle cx="8" cy="8" r="7.500" fill="#f6df2a" /><path d="M8 3V13M3 8H13" stroke="#23862b" stroke-width="3" /></svg>
        <time>12:29</time>
      </div>
    `;
  }
}

@customElement("app-root")
class AppRoot extends LitElement {
  static styles = css`
    :host { display: flex; flex-direction: column; position: relative; height: 100vh; overflow: hidden; font: 12px/16px "Noto Sans", "Noto Sans CJK SC", sans-serif; }
    slide-editor { flex: 1; }
    .meter { position: absolute; right: 326px; bottom: 56px; display: flex; align-items: center; height: 48px; filter: drop-shadow(0 2px 2px rgba(0, 0, 0, 0.45)); }
    .ball { display: grid; place-items: center; box-sizing: border-box; z-index: 1; width: 48px; height: 48px; border: 2px solid #e6e9e7; border-radius: 50%; color: #fff; font: 15px/44px "Liberation Sans", sans-serif; background: linear-gradient(#4c9a7c, #0c6b47 35%, #0b6a45 73%, #45c562 74%); }
    .rates { display: grid; grid-template-columns: 10px 35px 20px; align-items: center; box-sizing: border-box; height: 38px; width: 92px; margin-left: -14px; padding-left: 17px; border: 1px solid #c9c9c9; border-radius: 0 19px 19px 0; background: linear-gradient(#fbfbfb, #dedede); color: #111; font: 10px/14px "Noto Sans", sans-serif; }
    .rates span { text-align: right; }
    .rates svg { display: block; }
    .plus { grid-column: 3; grid-row: 1 / 3; margin-left: 4px; }
  `;

  render() {
    return html`
      <app-ribbon></app-ribbon>
      <slide-editor></slide-editor>
      <status-strip></status-strip>
      <task-strip></task-strip>
      <div class="meter">
        <div class="ball">25%</div>
        <div class="rates">
          <svg width="8" height="9"><path d="M4 9V2M1 4.500L4 1.500L7 4.500" fill="none" stroke="#e2403b" stroke-width="1.800" /></svg><span>0K/s</span>
          <svg width="8" height="9"><path d="M4 0V7M1 4.500L4 7.500L7 4.500" fill="none" stroke="#2c8f4e" stroke-width="1.800" /></svg><span>0K/s</span>
          <svg class="plus" width="20" height="20"><circle cx="9" cy="11" r="8" fill="#3a7de0" /><path d="M9 7V15M5 11H13" stroke="#fff" stroke-width="2" /><circle cx="15" cy="5" r="4" fill="#d93434" /></svg>
        </div>
      </div>
    `;
  }
}
